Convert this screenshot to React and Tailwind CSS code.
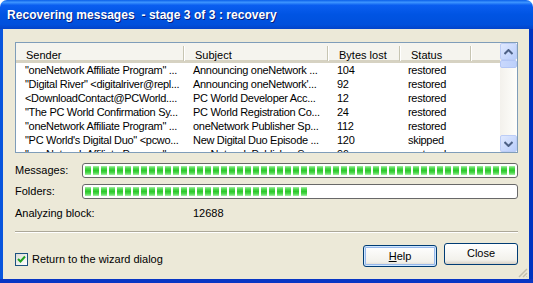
import React from "react";

const rows = [
  ['"oneNetwork Affiliate Program" ...', "Announcing oneNetwork ...", "104", "restored"],
  ['"Digital River" <digitalriver@repl...', "Announcing oneNetwork'...", "92", "restored"],
  ["<DownloadContact@PCWorld....", "PC World Developer Acc...", "12", "restored"],
  ['"The PC World Confirmation Sy...', "PC World Registration Co...", "24", "restored"],
  ['"oneNetwork Affiliate Program" ...', "oneNetwork Publisher Sp...", "112", "restored"],
  ['"PC World\'s Digital Duo" <pcwo...', "New Digital Duo Episode ...", "120", "skipped"],
  ['"oneNetwork Affiliate Program" ...', "oneNetwork Publisher Sp...", "96", "restored"],
];

function Blocks({ count }) {
  return (
    <div className="flex gap-[2px] h-full overflow-hidden">
      {Array.from({ length: count }).map((_, i) => (
        <div
          key={i}
          className="w-[6px] h-full shrink-0 bg-[linear-gradient(to_bottom,#a8eea8_0%,#4cd84c_25%,#2cc82c_50%,#4cd84c_75%,#a8eea8_100%)]"
        />
      ))}
    </div>
  );
}

function Progress({ count }) {
  return (
    <div className="flex-1 min-w-0 h-[15px] border border-[#686868] rounded-[3px] bg-white px-[2px] py-[2px] overflow-hidden">
      <Blocks count={count} />
    </div>
  );
}

function Sep() {
  return <div className="absolute right-0 top-[3px] h-[15px] w-[2px] border-l border-[#c7c5b2] bg-white" />;
}

function Arrow({ up }) {
  return (
    <svg width="9" height="6" viewBox="0 0 9 6">
      <path
        d={up ? "M0.5 5 L4.5 1 L8.5 5" : "M0.5 1 L4.5 5 L8.5 1"}
        fill="none"
        stroke="#4d6185"
        strokeWidth="2"
      />
    </svg>
  );
}

export default function App() {
  const font = { fontFamily: '"Liberation Sans", Arial, sans-serif' };
  return (
    <div className="w-[533px] h-[283px] flex flex-col text-[11px] text-black select-none overflow-hidden" style={font}>
      {/* Title bar */}
      <div className="h-[29px] shrink-0 rounded-t-[7px] bg-[linear-gradient(to_bottom,#0a5fe9_0%,#3d95ff_8%,#0a5ef0_18%,#0054e3_50%,#0050dc_85%,#0343c9_100%)] flex items-center pl-[7px]">
        <span className="text-white font-bold text-[12px] tracking-[0.05px] whitespace-pre [text-shadow:1px_1px_0_#0a1e7a]">
          Recovering messages  - stage 3 of 3 : recovery
        </span>
      </div>
      {/* Body with side borders */}
      <div className="flex-1 min-h-0 flex">
        <div className="w-[3px] shrink-0 bg-[#0855dd]" />
        <div className="flex-1 min-w-0 bg-[#ece9d8] relative flex flex-col pl-[12px] pr-[11px] pt-[13px]">
          {/* List */}
          <div className="h-[111px] shrink-0 border border-[#7f9db9] bg-white flex overflow-hidden">
            <div className="flex-1 min-w-0 flex flex-col overflow-hidden">
              {/* header */}
              <div className="h-[20px] shrink-0 flex bg-[#f5f4ee] border-b-[3px] border-[#d6d2c2] relative">
                <div className="w-[169px] shrink-0 relative pl-[10px] pt-[4px]">Sender<Sep /></div>
                <div className="w-[144px] shrink-0 relative pl-[10px] pt-[4px]">Subject<Sep /></div>
                <div className="w-[72px] shrink-0 relative pl-[10px] pt-[4px]">Bytes lost<Sep /></div>
                <div className="w-[71px] shrink-0 relative pl-[10px] pt-[4px]">Status<Sep /></div>
                <div className="flex-1" />
              </div>
              {rows.map((r, i) => (
                <div key={i} className="h-[14px] shrink-0 flex leading-[14px] whitespace-nowrap tracking-[-0.3px]">
                  <div className="w-[169px] shrink-0 pl-[9px] overflow-hidden">{r[0]}</div>
                  <div className="w-[144px] shrink-0 pl-[8px] overflow-hidden">{r[1]}</div>
                  <div className="w-[72px] shrink-0 pl-[8px] overflow-hidden">{r[2]}</div>
                  <div className="w-[71px] shrink-0 pl-[7px] overflow-hidden">{r[3]}</div>
                </div>
              ))}
            </div>
            {/* Scrollbar */}
            <div className="w-[17px] shrink-0 flex flex-col bg-[linear-gradient(to_right,#f3f1ec,#fefefb)]">
              <div className="h-[17px] shrink-0 rounded-[2px] border border-[#bccdf6] bg-[linear-gradient(135deg,#e0e9fe,#b8cdfb)] flex items-center justify-center">
                <Arrow up />
              </div>
              <div className="h-[8px] shrink-0 rounded-[2px] border border-[#b3c6f5] bg-[linear-gradient(to_right,#c9d8fc,#bcd0fb)]" />
              <div className="flex-1" />
              <div className="h-[17px] shrink-0 rounded-[2px] border border-[#bccdf6] bg-[linear-gradient(135deg,#e0e9fe,#b8cdfb)] flex items-center justify-center">
                <Arrow />
              </div>
            </div>
          </div>
          {/* Progress rows */}
          <div className="flex items-center mt-[10px] h-[15px]">
            <div className="w-[67px] shrink-0">Messages:</div>
            <Progress count={60} />
          </div>
          <div className="flex items-center mt-[6px] h-[15px]">
            <div className="w-[67px] shrink-0">Folders:</div>
            <Progress count={28} />
          </div>
          <div className="flex items-center mt-[7px] h-[14px]">
            <div className="w-[178px] shrink-0">Analyzing block:</div>
            <div>12688</div>
          </div>
          {/* separator */}
          <div className="mt-[11px] h-[2px] shrink-0 border-t border-[#aca899] bg-white" />
          {/* bottom */}
          <div className="flex mt-[10px]">
            <div className="flex items-center mt-[9px] h-[14px]">
              <div className="w-[13px] h-[13px] border border-[#1c5180] bg-[linear-gradient(135deg,#dcdcd7,#ffffff)] flex items-center justify-center">
                <svg width="9" height="9" viewBox="0 0 9 9">
                  <path d="M1 4 L3.5 6.5 L8 1.5" fill="none" stroke="#21a121" strokeWidth="2" />
                </svg>
              </div>
              <span className="ml-[4px]">Return to the wizard dialog</span>
            </div>
            <div className="flex-1" />
            <div className="mt-[2px] w-[74px] h-[22px] rounded-[3px] border border-[#003c74] bg-[linear-gradient(to_bottom,#ffffff,#f2f1eb_80%,#d6d0c5)] flex items-center justify-center shadow-[inset_0_0_0_1px_#cee7ff,inset_0_0_0_2px_#98b8ea]">
              <span><span className="underline">H</span>elp</span>
            </div>
            <div className="ml-[7px] w-[74px] h-[22px] rounded-[3px] border border-[#003c74] bg-[linear-gradient(to_bottom,#ffffff,#f2f1eb_80%,#d6d0c5)] flex items-center justify-center pb-[2px]">
              Close
            </div>
          </div>
          {/* resize grip */}
          <svg className="absolute right-[1px] bottom-[1px]" width="11" height="11" viewBox="0 0 11 11">
            <path d="M10 2 L2 10 M10 6 L6 10 M10 9.5 L9.5 10" stroke="#c3bfae" strokeWidth="1.5" />
          </svg>
        </div>
        <div className="w-[4px] shrink-0 bg-[#0034c0]" />
      </div>
      <div className="h-[4px] shrink-0 bg-[#0836c4]" />
    </div>
  );
}
